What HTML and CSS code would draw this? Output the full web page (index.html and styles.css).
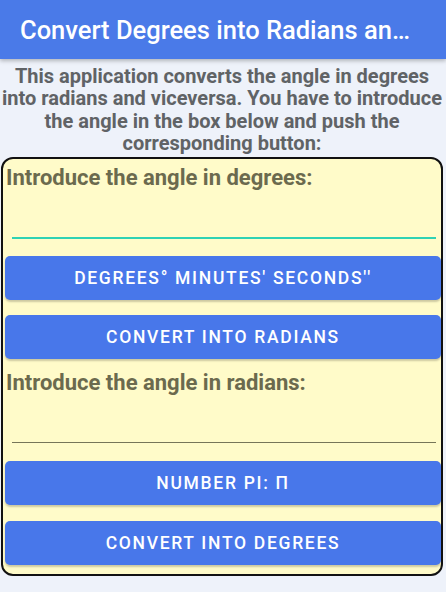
FILE: index.html
```html
<!DOCTYPE html>
<html>
<head>
<meta charset="utf-8">
<link rel="stylesheet" href="styles.css">
</head>
<body>
<header class="appbar">
  <h1 class="title">Convert Degrees into Radians an…</h1>
</header>
<main class="content">
  <p class="intro">This application converts the angle in degrees into radians and viceversa. You have to introduce the angle in the box below and push the corresponding button:</p>
  <section class="card">
    <label class="label">Introduce the angle in degrees:</label>
    <div class="field field-active"></div>
    <button class="btn btn-first">DEGREES° MINUTES' SECONDS''</button>
    <button class="btn">CONVERT INTO RADIANS</button>
    <label class="label label-second">Introduce the angle in radians:</label>
    <div class="field"></div>
    <button class="btn btn-after-field">NUMBER PI: Π</button>
    <button class="btn">CONVERT INTO DEGREES</button>
  </section>
</main>
</body>
</html>
```
FILE: styles.css
```css
* { box-sizing: border-box; }
html, body { margin: 0; padding: 0; }
body {
  width: 446px;
  height: 592px;
  background: #eef2fa;
  font-family: Roboto, "Noto Sans", sans-serif;
  overflow: hidden;
}
.appbar {
  height: 59px;
  background: #4a7ae8;
  display: flex;
  align-items: center;
  padding: 0 10px 0 20px;
  box-shadow: 0 2px 4px rgba(0,0,0,0.25);
  position: relative;
  z-index: 1;
}
.title {
  margin: 0;
  color: #ffffff;
  font-size: 25.5px;
  font-weight: 500;
  white-space: nowrap;
}
.content {
  padding: 6px 3px 0 1px;
}
.intro {
  margin: 0;
  text-align: center;
  font-size: 20px;
  font-weight: 700;
  line-height: 22.3px;
  color: #606366;
}
.card {
  margin-top: 3px;
  background: #fffbc9;
  border: 2px solid #111111;
  border-radius: 12px;
  display: flex;
  flex-direction: column;
  padding: 6px 0 9px 2px;
  height: 419px;
}
.label {
  font-size: 22px;
  font-weight: 700;
  color: #6b6a4e;
  padding-left: 1px;
  line-height: 26px;
}
.field {
  margin: 46px 5px 0 7px;
  height: 1px;
  background: #767558;
}
.field-active {
  height: 2px;
  background: #2fd2b4;
}
.btn {
  flex: none;
  margin-top: 15px;
  height: 44px;
  border: none;
  border-radius: 5px;
  background: #4877ea;
  color: #ffffff;
  font-family: Roboto, "Noto Sans", sans-serif;
  font-size: 17.5px;
  font-weight: 500;
  letter-spacing: 1.7px;
  box-shadow: 0 2px 2px rgba(0,0,0,0.2);
  width: 100%;
}
.btn-first { margin-top: 17px; }
.btn-after-field { margin-top: 18px; }
.btn-after-field + .btn { margin-top: 16px; }
.label-second { margin-top: 11px; }
```
